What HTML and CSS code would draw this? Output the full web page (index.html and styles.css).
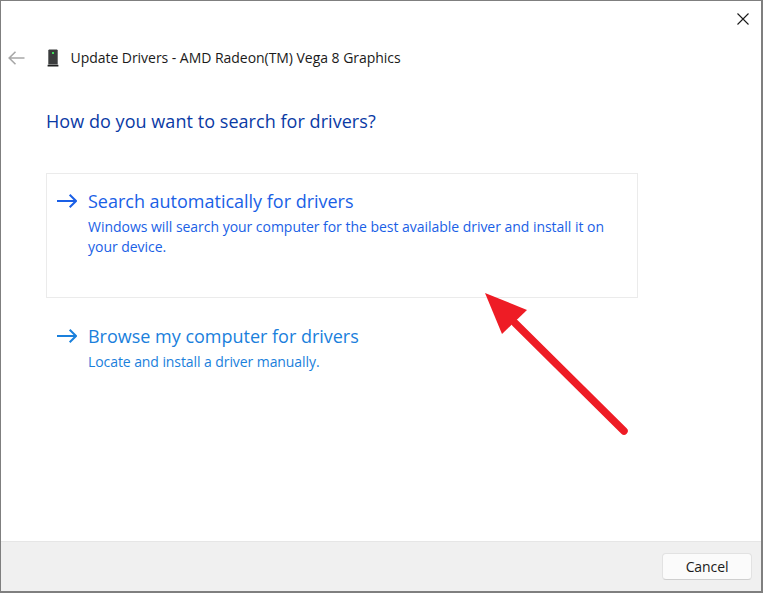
FILE: index.html
```html
<!DOCTYPE html>
<html lang="en">
<head>
<meta charset="utf-8">
<title>Update Drivers</title>
<link rel="stylesheet" href="styles.css">
</head>
<body>
<div class="window">
  <div class="close-row">
    <svg class="close-icon" width="12" height="12" viewBox="0 0 12 12"><path d="M0.5 0.5L11.5 11.5M11.5 0.5L0.5 11.5" stroke="#1a1a1a" stroke-width="1.1" fill="none"/></svg>
  </div>
  <div class="title-row">
    <svg class="back-icon" width="17" height="14" viewBox="0 0 17 14"><path d="M16.5 7H1.2M7.5 0.8L1.2 7L7.5 13.2" stroke="#a8a8a8" stroke-width="1.6" fill="none"/></svg>
    <svg class="device-icon" width="12" height="18" viewBox="0 0 12 18"><path d="M2 0.5H10L10.7 1.2V15.5H1.3V1.2Z" fill="#3a3c3d"/><rect x="0.6" y="15.8" width="10.8" height="1.7" fill="#1d1e1f"/><rect x="5" y="3" width="2" height="2" fill="#3fdc5a"/></svg>
    <span class="title-text">Update Drivers - AMD Radeon(TM) Vega 8 Graphics</span>
  </div>
  <main class="content">
    <h1 class="question">How do you want to search for drivers?</h1>
    <div class="option option-hover">
      <svg class="option-arrow" width="20" height="14" viewBox="0 0 20 14"><path d="M0 7H19M12.7 0.8L19 7L12.7 13.2" stroke="#1a5fe6" stroke-width="2" fill="none"/></svg>
      <div class="option-text">
        <div class="option-title">Search automatically for drivers</div>
        <div class="option-desc">Windows will search your computer for the best available driver and install it on your device.</div>
      </div>
    </div>
    <div class="option option-plain">
      <svg class="option-arrow" width="20" height="14" viewBox="0 0 20 14"><path d="M0 7H19M12.7 0.8L19 7L12.7 13.2" stroke="#1a80dc" stroke-width="2" fill="none"/></svg>
      <div class="option-text">
        <div class="option-title">Browse my computer for drivers</div>
        <div class="option-desc option-desc-tight">Locate and install a driver manually.</div>
      </div>
    </div>
  </main>
  <footer class="footer">
    <button class="cancel" type="button">Cancel</button>
  </footer>
  <svg class="annotation" width="763" height="593" viewBox="0 0 763 593">
    <path d="M515 323L624 431" stroke="#ee1c25" stroke-width="7.5" stroke-linecap="round" fill="none"/>
    <path d="M485 293L527 310L502 334Z" fill="#ee1c25"/>
  </svg>
</div>
</body>
</html>
```
FILE: styles.css
```css
* { box-sizing: border-box; }
html, body { margin: 0; padding: 0; }
body { width: 763px; height: 593px; overflow: hidden; font-family: "Open Sans", "Noto Sans", sans-serif; }
.window { position: relative; width: 763px; height: 593px; background: #fff; border: 1px solid #7f7f7f; border-right-width: 2px; border-bottom-width: 2px; display: flex; flex-direction: column; }
.close-row { height: 36px; display: flex; justify-content: flex-end; align-items: flex-start; padding: 12px 12px 0 0; }
.close-icon { display: block; }
.title-row { height: 41px; display: flex; align-items: center; color: #1a1a1a; padding-left: 7px; }
.back-icon { display: block; margin-right: 22px; }
.device-icon { display: block; margin-right: 11.5px; }
.title-text { font-size: 14px; letter-spacing: -0.04px; white-space: nowrap; }
.content { flex: 1; padding: 0 0 0 45px; display: flex; flex-direction: column; }
.question { margin: 0; font-weight: 400; font-size: 18px; line-height: 26px; color: #0a3aa5; padding-top: 30px; height: 95px; letter-spacing: 0.05px; }
.option { width: 592px; height: 125px; display: flex; align-items: flex-start; padding: 15px 10px 0 10px; border: 1px solid transparent; }
.option-hover { border-color: #ebebeb; color: #1a5fe6; }
.option-plain { color: #1a80dc; margin-top: 10px; height: 110px; }
.option-arrow { display: block; flex: none; margin-top: 5px; margin-right: 11px; }
.option-text { flex: 1; }
.option-title { font-size: 18px; line-height: 24px; letter-spacing: -0.01px; }
.option-desc { font-size: 14px; line-height: 20px; margin-top: 4px; letter-spacing: -0.03px; }
.option-desc-tight { letter-spacing: -0.08px; }
.footer { height: 50px; flex: none; background: #f0f0f0; border-top: 1px solid #e6e6e6; display: flex; justify-content: flex-end; align-items: flex-start; padding: 11px 9px 0 0; }
.cancel { width: 90px; height: 27px; background: #fbfbfb; border: 1px solid #e2e2e2; border-bottom-color: #cfcfcf; border-radius: 4px; font: 14px "Open Sans", "Noto Sans", sans-serif; letter-spacing: -0.1px; color: #1a1a1a; padding: 0; }
.annotation { position: absolute; left: -1px; top: -1px; pointer-events: none; }
```
